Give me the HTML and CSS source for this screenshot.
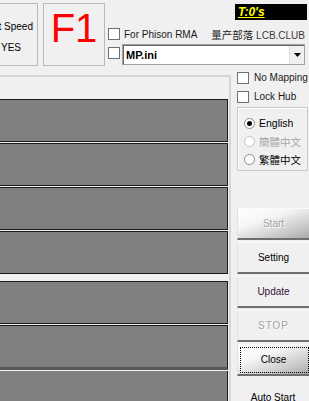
FILE: index.html
```html
<!DOCTYPE html>
<html lang="en">
<head>
    <meta charset="UTF-8">
    <meta name="viewport" content="width=device-width, initial-scale=1.0">
    <title>MPTool</title>
    <link rel="stylesheet" href="styles.css">
</head>
<body>

    <div class="top">
        <div class="speed-box">
            <span class="speed-label">Test Speed</span>
            <span class="speed-value">YES</span>
        </div>
        <div class="key-box">F1</div>
        <div class="top-right">
            <div class="timer-row">
                <div class="timer">T:0's</div>
            </div>
            <div class="rma-row">
                <span class="check"><span class="box"></span>For Phison RMA</span>
                <span class="brand">量产部落 <span class="brand-en">LCB.CLUB</span></span>
            </div>
            <div class="ini-row">
                <span class="box"></span>
                <div class="combo">
                    <span class="combo-text">MP.ini</span>
                    <span class="combo-btn">
                        <svg width="7" height="4" viewBox="0 0 7 4"><polygon points="0,0 7,0 3.5,4" fill="#000"/></svg>
                    </span>
                </div>
            </div>
        </div>
    </div>

    <div class="main">
        <div class="ports">
            <div class="port"></div>
            <div class="port"></div>
            <div class="port"></div>
            <div class="port wide-gap"></div>
            <div class="port"></div>
            <div class="port split"></div>
            <div class="port last"></div>
        </div>

        <div class="side">
            <div class="check side-check"><span class="box"></span>No Mapping</div>
            <div class="check side-check"><span class="box"></span>Lock Hub</div>

            <div class="lang-group">
                <div class="radio-row"><span class="radio checked"></span>English</div>
                <div class="radio-row disabled"><span class="radio"></span>簡體中文</div>
                <div class="radio-row"><span class="radio"></span>繁體中文</div>
            </div>

            <div class="buttons">
                <div class="btn glossy disabled">Start</div>
                <div class="btn">Setting</div>
                <div class="btn update">Update</div>
                <div class="btn disabled stop">STOP</div>
                <div class="btn glossy focused">Close</div>
            </div>
            <div class="auto-start">Auto Start</div>
        </div>
    </div>

</body>
</html>
```

FILE: styles.css
```css
body {
    margin: 0;
    width: 309px;
    height: 401px;
    overflow: hidden;
    background-color: #f0f0f0;
    font-family: "Liberation Sans", "Noto Sans CJK SC", sans-serif;
    font-size: 10px;
    color: #000;
}

/* top strip */
.top {
    display: flex;
    height: 68px;
}
.speed-box {
    box-sizing: border-box;
    width: 68px;
    height: 63px;
    margin: 3px 0 0 -30px;
    border: 1px solid #b9b9b9;
    display: flex;
    flex-direction: column;
    align-items: flex-end;
    padding-top: 17px;
}
.speed-label {
    padding-right: 4px;
}
.speed-value {
    margin-top: 10px;
    padding-right: 16px;
}
.key-box {
    box-sizing: border-box;
    width: 62px;
    height: 63px;
    margin: 3px 0 0 5px;
    border: 1px solid #b9b9b9;
    color: #ff0000;
    font-size: 40px;
    text-align: center;
    line-height: 44px;
    padding-top: 2px;
}
.top-right {
    flex: 1;
    margin-left: 3px;
}
.timer-row {
    display: flex;
    justify-content: flex-end;
    height: 26px;
}
.timer {
    width: 69px;
    height: 16px;
    margin: 4px 2px 0 0;
    padding-left: 3px;
    background-color: #000;
    color: #ffff00;
    font-size: 12px;
    font-weight: bold;
    font-style: italic;
    text-decoration: underline;
    line-height: 16px;
}
.rma-row {
    display: flex;
    align-items: center;
    justify-content: space-between;
    height: 16px;
}
.check {
    display: flex;
    align-items: center;
    color: #1a1a1a;
}
.box {
    box-sizing: border-box;
    display: inline-block;
    width: 12px;
    height: 12px;
    margin-right: 4px;
    background-color: #fff;
    border: 1px solid #707070;
}
.rma-row .box {
    margin-right: 4px;
}
.brand {
    font-size: 10.5px;
    color: #222;
    margin-right: 4px;
}
.brand-en {
    font-size: 10px;
    color: #3a3a3a;
}
.ini-row {
    display: flex;
    margin-top: 2px;
}
.ini-row .box {
    margin: 3px 2px 0 0;
}
.combo {
    box-sizing: border-box;
    flex: 1;
    height: 21px;
    margin-right: 4px;
    display: flex;
    align-items: center;
    background-color: #fff;
    border: 1px solid #a0a0a0;
    box-shadow: inset 1px 1px 0 #696969;
}
.combo-text {
    flex: 1;
    padding-left: 3px;
    font-size: 11px;
    font-weight: bold;
}
.combo-btn {
    box-sizing: border-box;
    width: 15px;
    height: 18px;
    margin-top: 1px;
    display: flex;
    align-items: center;
    justify-content: center;
    background-color: #f0f0f0;
    border-left: 1px solid #dcdcdc;
}

/* main area */
.main {
    display: flex;
}
.ports {
    box-sizing: border-box;
    width: 231px;
    height: 340px;
    margin-top: 7px;
    padding-top: 22px;
    border-top: 2px solid #d6d6d6;
    border-right: 2px solid #d6d6d6;
}
.port {
    width: 227px;
    height: 41px;
    background-color: #808080;
    border: 1px solid #1c1c1c;
    border-left: none;
    margin-bottom: 1px;
}
.port.wide-gap {
    margin-bottom: 7px;
}
.port.split {
    border-bottom: 3px solid #585858;
}
.port.last {
    border-top: none;
    height: 60px;
}

/* side column */
.side {
    flex: 1;
    padding-left: 6px;
}
.side-check {
    height: 19px;
}
.side-check .box {
    margin-right: 5px;
}
.lang-group {
    box-sizing: border-box;
    width: 71px;
    height: 64px;
    margin-top: 1px;
    padding: 6px 0 0 6px;
    border: 1px solid #c8c8c8;
    box-shadow: inset 1px 1px 0 #fff;
}
.radio-row {
    display: flex;
    align-items: center;
    height: 18px;
    font-size: 10.5px;
}
.radio-row.disabled {
    color: #a6a6a6;
}
.radio {
    box-sizing: border-box;
    width: 11px;
    height: 11px;
    margin-right: 4px;
    border-radius: 50%;
    border: 1px solid #8a8a8a;
    background-color: #fff;
    display: flex;
    align-items: center;
    justify-content: center;
}
.radio-row.disabled .radio {
    border-color: #c4c4c4;
}
.radio.checked::after {
    content: "";
    width: 5px;
    height: 5px;
    border-radius: 50%;
    background-color: #000;
}
.buttons {
    margin-top: 37px;
    display: flex;
    flex-direction: column;
    gap: 2px;
}
.btn {
    box-sizing: border-box;
    position: relative;
    height: 32px;
    line-height: 30px;
    text-align: center;
    background-color: #f0f0f0;
    border-top: 1px solid #fafafa;
    border-left: 1px solid #e2e2e2;
    border-bottom: 2px solid #6e6e6e;
}
.btn.glossy {
    background: linear-gradient(160deg, #ffffff 0%, #f6f6f6 35%, #cfcfcf 70%, #a9a9a9 100%);
}
.btn.disabled {
    color: #a3a3a3;
    text-shadow: 1px 1px 0 #fff;
}
.btn.stop {
    letter-spacing: 1px;
}
.btn.update {
    color: #351340;
}
.btn.focused::after {
    content: "";
    position: absolute;
    top: 2px;
    left: 2px;
    right: 0;
    bottom: 1px;
    border: 1px dotted #000;
}
.auto-start {
    margin-top: 16px;
    text-align: center;
}
```
